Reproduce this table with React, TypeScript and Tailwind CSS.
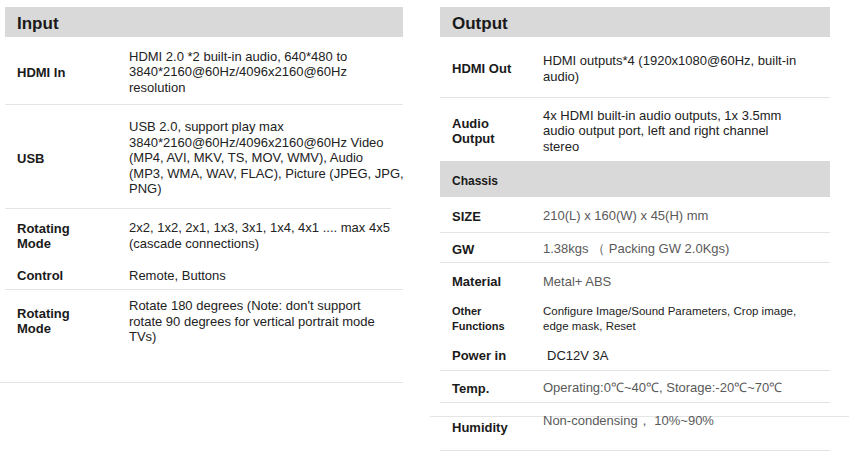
import React from "react";

const FONT = { fontFamily: '"Liberation Sans", Arial, sans-serif' };

interface RowProps {
  label: React.ReactNode;
  children: React.ReactNode;
  height: string;
  labelWidth: string;
  border?: boolean;
  muted?: boolean;
  labelSize?: string;
  valueSize?: string;
  className?: string;
}

const Row: React.FC<RowProps> = ({
  label,
  children,
  height,
  labelWidth,
  border = true,
  muted = false,
  labelSize = "text-[13px]",
  valueSize = "text-[13px]",
  className = "",
}) => (
  <div
    className={`flex items-center px-3 pt-[3px] ${height} ${
      border ? "border-b border-[#e4e4e4]" : ""
    } ${className}`}
  >
    <div
      className={`${labelWidth} shrink-0 font-bold leading-[15px] text-[#1a1a1a] ${labelSize}`}
    >
      {label}
    </div>
    <div
      className={`whitespace-nowrap leading-[15.5px] ${valueSize} ${
        muted ? "text-[#5a5a5a]" : "text-[#222]"
      }`}
    >
      {children}
    </div>
  </div>
);

const Header: React.FC<{ title: string; small?: boolean; height: string }> = ({
  title,
  small,
  height,
}) => (
  <div className={`flex items-center bg-[#d9d9d9] px-3 pt-[4px] ${height}`}>
    <span
      className={`font-bold text-[#1a1a1a] ${
        small ? "text-[12px]" : "text-[17px]"
      }`}
    >
      {title}
    </span>
  </div>
);

export default function App() {
  return (
    <div className="flex h-[466px] w-[849px] bg-white pt-[7px]" style={FONT}>
      {/* Input */}
      <div className="ml-[5px] flex w-[398px] flex-col">
        <Header title="Input" height="h-[30px]" />
        <Row label="HDMI In" height="h-[68px]" labelWidth="w-[112px]">
          HDMI 2.0 *2 built-in audio, 640*480 to
          <br />
          3840*2160@60Hz/4096x2160@60Hz
          <br />
          resolution
        </Row>
        <div className="mr-[12px] border-b border-[#e4e4e4]">
          <Row label="USB" height="h-[103px]" labelWidth="w-[112px]" border={false}>
            USB 2.0, support play max
            <br />
            3840*2160@60Hz/4096x2160@60Hz Video
            <br />
            (MP4, AVI, MKV, TS, MOV, WMV), Audio
            <br />
            (MP3, WMA, WAV, FLAC), Picture (JPEG, JPG,
            <br />
            PNG)
          </Row>
        </div>
        <Row
          label={
            <>
              Rotating
              <br />
              Mode
            </>
          }
          height="h-[50px]"
          labelWidth="w-[112px]"
          border={false}
        >
          2x2, 1x2, 2x1, 1x3, 3x1, 1x4, 4x1 .... max 4x5
          <br />
          (cascade connections)
        </Row>
        <Row label="Control" height="h-[31px]" labelWidth="w-[112px]">
          Remote, Buttons
        </Row>
        <div className="-ml-[5px] h-[93px] border-b border-[#e4e4e4] pl-[5px] pt-[5px]">
          <Row
            label={
              <>
                Rotating
                <br />
                Mode
              </>
            }
            height="h-auto"
            labelWidth="w-[112px]"
            border={false}
          >
            Rotate 180 degrees (Note: don't support
            <br />
            rotate 90 degrees for vertical portrait mode
            <br />
            TVs)
          </Row>
        </div>
      </div>

      {/* Output */}
      <div className="ml-[37px] flex w-[390px] flex-col">
        <Header title="Output" height="h-[30px]" />
        <Row label="HDMI Out" height="h-[61px]" labelWidth="w-[91px]">
          HDMI outputs*4 (1920x1080@60Hz, built-in
          <br />
          audio)
        </Row>
        <Row
          label={
            <>
              Audio
              <br />
              Output
            </>
          }
          height="h-[63px]"
          labelWidth="w-[91px]"
          border={false}
        >
          4x HDMI built-in audio outputs, 1x 3.5mm
          <br />
          audio output port, left and right channel
          <br />
          stereo
        </Row>
        <Header title="Chassis" small height="h-[36px]" />
        <Row label="SIZE" height="h-[36px]" labelWidth="w-[91px]" muted>
          210(L) x 160(W) x 45(H) mm
        </Row>
        <Row label="GW" height="h-[30px]" labelWidth="w-[91px]" muted>
          1.38kgs （ Packing GW 2.0Kgs)
        </Row>
        <Row label="Material" height="h-[34px]" labelWidth="w-[91px]" border={false} muted>
          Metal+ ABS
        </Row>
        <Row
          label={
            <>
              Other
              <br />
              Functions
            </>
          }
          height="h-[41px]"
          labelWidth="w-[91px]"
          labelSize="text-[11px]"
          valueSize="text-[11.5px]"
          border={false}
        >
          Configure Image/Sound Parameters, Crop image,
          <br />
          edge mask, Reset
        </Row>
        <Row label="Power in" height="h-[33px]" labelWidth="w-[95px]">
          DC12V 3A
        </Row>
        <Row label="Temp." height="h-[32px]" labelWidth="w-[91px]" muted>
          Operating:0℃~40℃, Storage:-20℃~70℃
        </Row>
        <div className="relative flex h-[48px] items-center border-b border-[#e4e4e4] px-3 pt-[3px]">
          <div className="absolute left-[-10px] right-[-19px] top-[13px] border-t border-[#e4e4e4]" />
          <div className="w-[91px] shrink-0 text-[13px] font-bold text-[#1a1a1a]">
            Humidity
          </div>
          <div className="-translate-y-[7px] whitespace-nowrap text-[13px] text-[#5a5a5a]">
            Non-condensing， 10%~90%
          </div>
        </div>
      </div>
    </div>
  );
}
